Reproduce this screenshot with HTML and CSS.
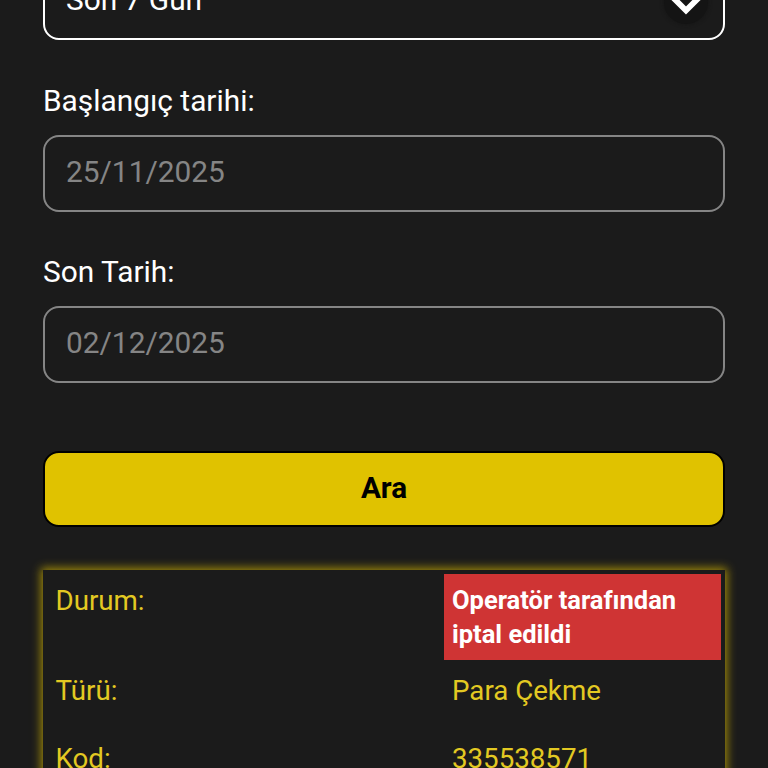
FILE: index.html
```html
<!DOCTYPE html>
<html>
  <head>
    <title>Hesap hareketleri</title>
    <link rel="stylesheet" href="styles.css">
  </head>
  <body>
    <div class="page">
      <form class="filter">
        <div class="field field-period">
          <div class="input select">
            Son 7 Gün
            <span class="select-arrow">
              <svg width="44" height="44" viewBox="0 0 44 44"><path d="M8 16.5l14 14 14-14" fill="none" stroke="#fff" stroke-width="5.8"/></svg>
            </span>
          </div>
        </div>
        <div class="field">
          <label class="field-label">Başlangıç tarihi:</label>
          <div class="input date">25/11/2025</div>
        </div>
        <div class="field">
          <label class="field-label">Son Tarih:</label>
          <div class="input date">02/12/2025</div>
        </div>
        <div class="btn-search">Ara</div>
      </form>
      <table class="result">
        <tr>
          <td class="result-name first">Durum:</td>
          <td class="result-value status-cancelled">Operatör tarafından iptal edildi</td>
        </tr>
        <tr>
          <td class="result-name">Türü:</td>
          <td class="result-value">Para Çekme</td>
        </tr>
        <tr>
          <td class="result-name">Kod:</td>
          <td class="result-value">335538571</td>
        </tr>
      </table>
    </div>
  </body>
</html>
```

FILE: styles.css
```css
html, body {
  height: 100%;
  margin: 0;
  overflow: hidden;
}
body {
  background-color: #1b1b1b;
  font-family: Roboto, "Liberation Sans", sans-serif;
  color: #fff;
}
.page {
  margin-top: -37px;
  padding: 0 43px;
}
.filter {
  display: flex;
  flex-direction: column;
}
.field {
  margin-bottom: 42px;
}
.field-period {
  margin-bottom: 43px;
}
.field-label {
  display: block;
  font-size: 29.85px;
  line-height: 36px;
  margin-bottom: 16px;
}
.input {
  height: 77px;
  box-sizing: border-box;
  display: flex;
  align-items: center;
  padding: 0 21px 5px;
  border: 2px solid #858585;
  border-radius: 16px;
  font-size: 29.85px;
}
.date {
  color: #858585;
}
.select {
  position: relative;
  border-color: #fff;
  color: #fff;
}
.select-arrow {
  position: absolute;
  top: 15px;
  right: 15px;
  width: 44px;
  height: 44px;
  border-radius: 50%;
  background-color: #141414;
  box-shadow: 0 0 4px #141414;
}
.select-arrow svg {
  display: block;
}
.btn-search {
  height: 76px;
  margin-top: 26px;
  padding-bottom: 4px;
  display: flex;
  align-items: center;
  justify-content: center;
  background-color: #e0c200;
  border: 2px solid #000;
  border-radius: 16px;
  color: #000;
  font-size: 29.7px;
  font-weight: 700;
  box-sizing: border-box;
}
.result {
  width: 100%;
  table-layout: fixed;
  margin-top: 43px;
  border-collapse: separate;
  border-spacing: 2px;
  border: 0 none;
  padding: 2px;
  box-shadow: 0 0 9px 2px #a08a08;
  background-color: #1b1b1b;
  color: #e3c922;
  font-size: 27.7px;
}
.result td {
  vertical-align: top;
  padding: 12px 9px 20px 8.5px;
  line-height: 34px;
}
.result-name {
  width: 377px;
}
.result .first {
  padding-top: 10px;
}
.result .status-cancelled {
  background-color: #cf3434;
  color: #fff;
  font-weight: 700;
  font-size: 25.5px;
  line-height: 33.5px;
  padding: 10px 9px 8px 8.5px;
  height: 86px;
  box-sizing: border-box;
}
```
